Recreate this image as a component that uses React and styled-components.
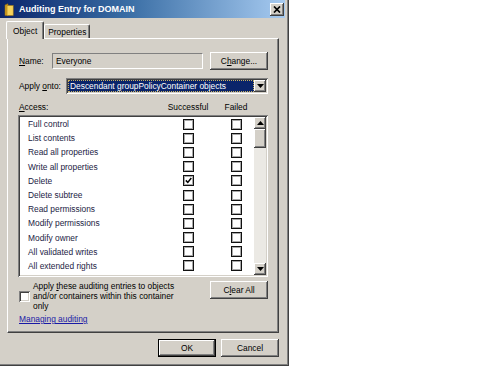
import React from 'react';
import styled, { createGlobalStyle } from 'styled-components';

const GlobalStyle = createGlobalStyle`
  html, body {
    margin: 0;
    padding: 0;
    background: #fff;
  }
  body {
    font-family: "Liberation Sans", Arial, sans-serif;
    font-size: 8.4px;
    color: #000;
  }
  #root {
    width: 480px;
    height: 366px;
    overflow: hidden;
  }
`;

const raised = `
  background: #d4d0c8;
  box-shadow: inset -1px -1px 0 #404040, inset 1px 1px 0 #fff,
    inset -2px -2px 0 #808080, inset 2px 2px 0 #d4d0c8;
`;

const sunken = `
  box-shadow: inset 1px 1px 0 #808080, inset -1px -1px 0 #fff,
    inset 2px 2px 0 #404040, inset -2px -2px 0 #d4d0c8;
`;

const Window = styled.div`
  width: 289px;
  height: 366px;
  box-sizing: border-box;
  padding: 0 4px 3px 0;
  background: #d4d0c8;
  box-shadow: inset -1px -1px 0 #404040, inset -2px -2px 0 #808080;
  display: flex;
  flex-direction: column;
`;

const TitleBar = styled.div`
  height: 18px;
  flex: 0 0 18px;
  display: flex;
  align-items: center;
  padding: 0 1px 0 4px;
  background: linear-gradient(90deg, #0a246a 0%, #3a6ea5 45%, #a6caf0 100%);
  color: #fff;
  font-weight: bold;
  font-size: 9px;
`;

const TitleText = styled.span`
  flex: 1;
  margin-left: 5px;
  white-space: nowrap;
`;

const CloseButton = styled.div`
  ${raised}
  width: 14px;
  height: 13px;
  display: flex;
  align-items: center;
  justify-content: center;
`;

const TabStrip = styled.div`
  height: 20px;
  flex: 0 0 20px;
  display: flex;
  align-items: flex-end;
  padding-left: 6px;
  position: relative;
  z-index: 1;
`;

const Tab = styled.div`
  height: ${(p) => (p.$active ? 18 : 14)}px;
  margin-bottom: ${(p) => (p.$active ? -1 : 0)}px;
  padding: ${(p) => (p.$active ? '1px 6px 0' : '1px 3px 0')};
  box-sizing: border-box;
  display: flex;
  align-items: center;
  background: #d4d0c8;
  border-left: 1px solid #fff;
  border-top: 1px solid #fff;
  border-right: 1px solid #404040;
  border-radius: 2px 2px 0 0;
  box-shadow: inset -1px 0 0 #808080;
  white-space: nowrap;
`;

const Panel = styled.div`
  margin-left: 7px;
  width: 272px;
  height: 295px;
  flex: 0 0 295px;
  box-sizing: border-box;
  border-left: 1px solid #fff;
  border-top: 1px solid #fff;
  border-right: 1px solid #404040;
  border-bottom: 1px solid #404040;
  box-shadow: inset -1px -1px 0 #808080;
  padding: 13px 10px 0;
  display: flex;
  flex-direction: column;
`;

const FieldRow = styled.div`
  display: flex;
  align-items: center;
  height: ${(p) => p.$h}px;
  margin-top: ${(p) => p.$mt || 0}px;
`;

const Label = styled.span`
  flex: 0 0 ${(p) => p.$w}px;
  padding-left: 1px;
  box-sizing: border-box;
  white-space: nowrap;
`;

const ReadOnlyField = styled.div`
  width: 151px;
  height: 16px;
  box-sizing: border-box;
  border-top: 1px solid #808080;
  border-left: 1px solid #808080;
  border-bottom: 1px solid #fff;
  border-right: 1px solid #fff;
  padding-left: 3px;
  display: flex;
  align-items: center;
`;

const Button = styled.div`
  ${raised}
  width: 58px;
  height: 18px;
  box-sizing: border-box;
  display: flex;
  align-items: center;
  justify-content: center;
  margin-left: ${(p) => p.$ml || 0}px;
  white-space: nowrap;
  ${(p) =>
    p.$default &&
    `
    border: 1px solid #000;
  `}
`;

const Combo = styled.div`
  ${sunken}
  background: #fff;
  width: 202px;
  height: 16px;
  box-sizing: border-box;
  padding: 2px;
  display: flex;
`;

const ComboValue = styled.div`
  flex: 1;
  background: #0a246a;
  color: #fff;
  outline: 1px dotted #c8b060;
  outline-offset: -1px;
  padding-left: 2px;
  display: flex;
  align-items: center;
  white-space: nowrap;
  overflow: hidden;
`;

const ArrowButton = styled.div`
  ${raised}
  width: 12px;
  height: ${(p) => p.$h || 12}px;
  flex: 0 0 ${(p) => p.$h || 12}px;
  display: flex;
  align-items: center;
  justify-content: center;
`;

const HeaderRow = styled.div`
  display: grid;
  grid-template-columns: 146px 48px 48px;
  height: 10px;
  margin-top: 8px;
  align-items: center;
  white-space: nowrap;
`;

const HeaderCell = styled.span`
  text-align: ${(p) => (p.$center ? 'center' : 'left')};
  padding-left: ${(p) => (p.$center ? 0 : 1)}px;
`;

const ListBox = styled.div`
  ${sunken}
  background: #fff;
  margin-top: 3px;
  height: 162px;
  flex: 0 0 162px;
  box-sizing: border-box;
  padding: 2px;
  display: flex;
`;

const Rows = styled.div`
  flex: 1;
  overflow: hidden;
`;

const Row = styled.div`
  height: 14.2px;
  display: flex;
  align-items: center;
  padding-left: 8px;
  color: #1c1c44;
  white-space: nowrap;
`;

const RowName = styled.span`
  flex: 0 0 155px;
`;

const Check = styled.span`
  width: 11px;
  height: 11px;
  flex: 0 0 11px;
  box-sizing: border-box;
  border: 1px solid #111;
  box-shadow: inset 0 0 0 1px #a8a8a8;
  background: #fff;
  margin-left: ${(p) => p.$ml || 0}px;
  display: flex;
  align-items: center;
  justify-content: center;
`;

const ScrollBar = styled.div`
  width: 12px;
  flex: 0 0 12px;
  display: flex;
  flex-direction: column;
  background: #ebe9e4;
`;

const Thumb = styled.div`
  ${raised}
  height: 19px;
  flex: 0 0 19px;
`;

const Track = styled.div`
  flex: 1;
`;

const OptionArea = styled.div`
  display: flex;
  align-items: flex-start;
  margin-top: 4px;
  height: 30px;
`;

const OptionLabel = styled.div`
  flex: 1;
  display: flex;
  align-items: center;
  height: 30px;
`;

const PlainBox = styled.span`
  ${sunken}
  background: #fff;
  width: 11px;
  height: 11px;
  flex: 0 0 11px;
  margin-left: 1px;
  margin-right: 3px;
`;

const OptionText = styled.span`
  line-height: 10px;
  white-space: nowrap;
`;

const HelpLink = styled.span`
  margin-top: 3px;
  margin-left: 1px;
  height: 10px;
  line-height: 10px;
  color: #1a1aa6;
  text-decoration: underline;
  align-self: flex-start;
`;

const Footer = styled.div`
  margin-left: 7px;
  margin-top: 6px;
  width: 272px;
  display: flex;
  justify-content: flex-end;
  gap: 5px;
`;

const Triangle = ({ down }) => (
  <svg width="7" height="4" viewBox="0 0 7 4">
    <polygon points={down ? '0,0 7,0 3.5,4' : '0,4 7,4 3.5,0'} fill="#000" />
  </svg>
);

const FolderIcon = () => (
  <svg width="10" height="13" viewBox="0 0 10 13">
    <path d="M1 2 L4 0.8 L4 12.5 L1 12.5 Z" fill="#d9a520" stroke="#8a6410" strokeWidth="0.6" />
    <rect x="3" y="2.5" width="6.2" height="10" fill="#f7d35a" stroke="#a07818" strokeWidth="0.6" />
  </svg>
);

const CloseGlyph = () => (
  <svg width="8" height="7" viewBox="0 0 8 7">
    <path d="M1 0.5 L7 6.5 M7 0.5 L1 6.5" stroke="#000" strokeWidth="1.7" />
  </svg>
);

const CheckMark = () => (
  <svg width="7" height="7" viewBox="0 0 7 7">
    <path d="M0.8 3.4 L2.8 5.4 L6.3 1" stroke="#000" strokeWidth="1.5" fill="none" />
  </svg>
);

const permissions = [
  { name: 'Full control' },
  { name: 'List contents' },
  { name: 'Read all properties' },
  { name: 'Write all properties' },
  { name: 'Delete', success: true },
  { name: 'Delete subtree' },
  { name: 'Read permissions' },
  { name: 'Modify permissions' },
  { name: 'Modify owner' },
  { name: 'All validated writes' },
  { name: 'All extended rights' },
  { name: 'Create all child objects' },
];

export default function App() {
  return (
    <>
      <GlobalStyle />
      <Window>
        <TitleBar>
          <FolderIcon />
          <TitleText>Auditing Entry for DOMAIN</TitleText>
          <CloseButton>
            <CloseGlyph />
          </CloseButton>
        </TitleBar>

        <TabStrip>
          <Tab $active>Object</Tab>
          <Tab>Properties</Tab>
        </TabStrip>

        <Panel>
          <FieldRow $h={18}>
            <Label $w={34}>
              <u>N</u>ame:
            </Label>
            <ReadOnlyField>Everyone</ReadOnlyField>
            <Button $ml={7}>
              C<u>h</u>ange...
            </Button>
          </FieldRow>

          <FieldRow $h={16} $mt={8}>
            <Label $w={48}>
              Apply <u>o</u>nto:
            </Label>
            <Combo>
              <ComboValue>Descendant groupPolicyContainer objects</ComboValue>
              <ArrowButton>
                <Triangle down />
              </ArrowButton>
            </Combo>
          </FieldRow>

          <HeaderRow>
            <HeaderCell>
              <u>A</u>ccess:
            </HeaderCell>
            <HeaderCell $center>Successful</HeaderCell>
            <HeaderCell $center>Failed</HeaderCell>
          </HeaderRow>

          <ListBox>
            <Rows>
              {permissions.map((p) => (
                <Row key={p.name}>
                  <RowName>{p.name}</RowName>
                  <Check>{p.success && <CheckMark />}</Check>
                  <Check $ml={37}>{p.failed && <CheckMark />}</Check>
                </Row>
              ))}
            </Rows>
            <ScrollBar>
              <ArrowButton>
                <Triangle />
              </ArrowButton>
              <Thumb />
              <Track />
              <ArrowButton>
                <Triangle down />
              </ArrowButton>
            </ScrollBar>
          </ListBox>

          <OptionArea>
            <OptionLabel>
              <PlainBox />
              <OptionText>
                Apply <u>t</u>hese auditing entries to objects
                <br />
                and/or containers within this container
                <br />
                only
              </OptionText>
            </OptionLabel>
            <Button>
              C<u>l</u>ear All
            </Button>
          </OptionArea>

          <HelpLink>Managing auditing</HelpLink>
        </Panel>

        <Footer>
          <Button $default>OK</Button>
          <Button>Cancel</Button>
        </Footer>
      </Window>
    </>
  );
}
